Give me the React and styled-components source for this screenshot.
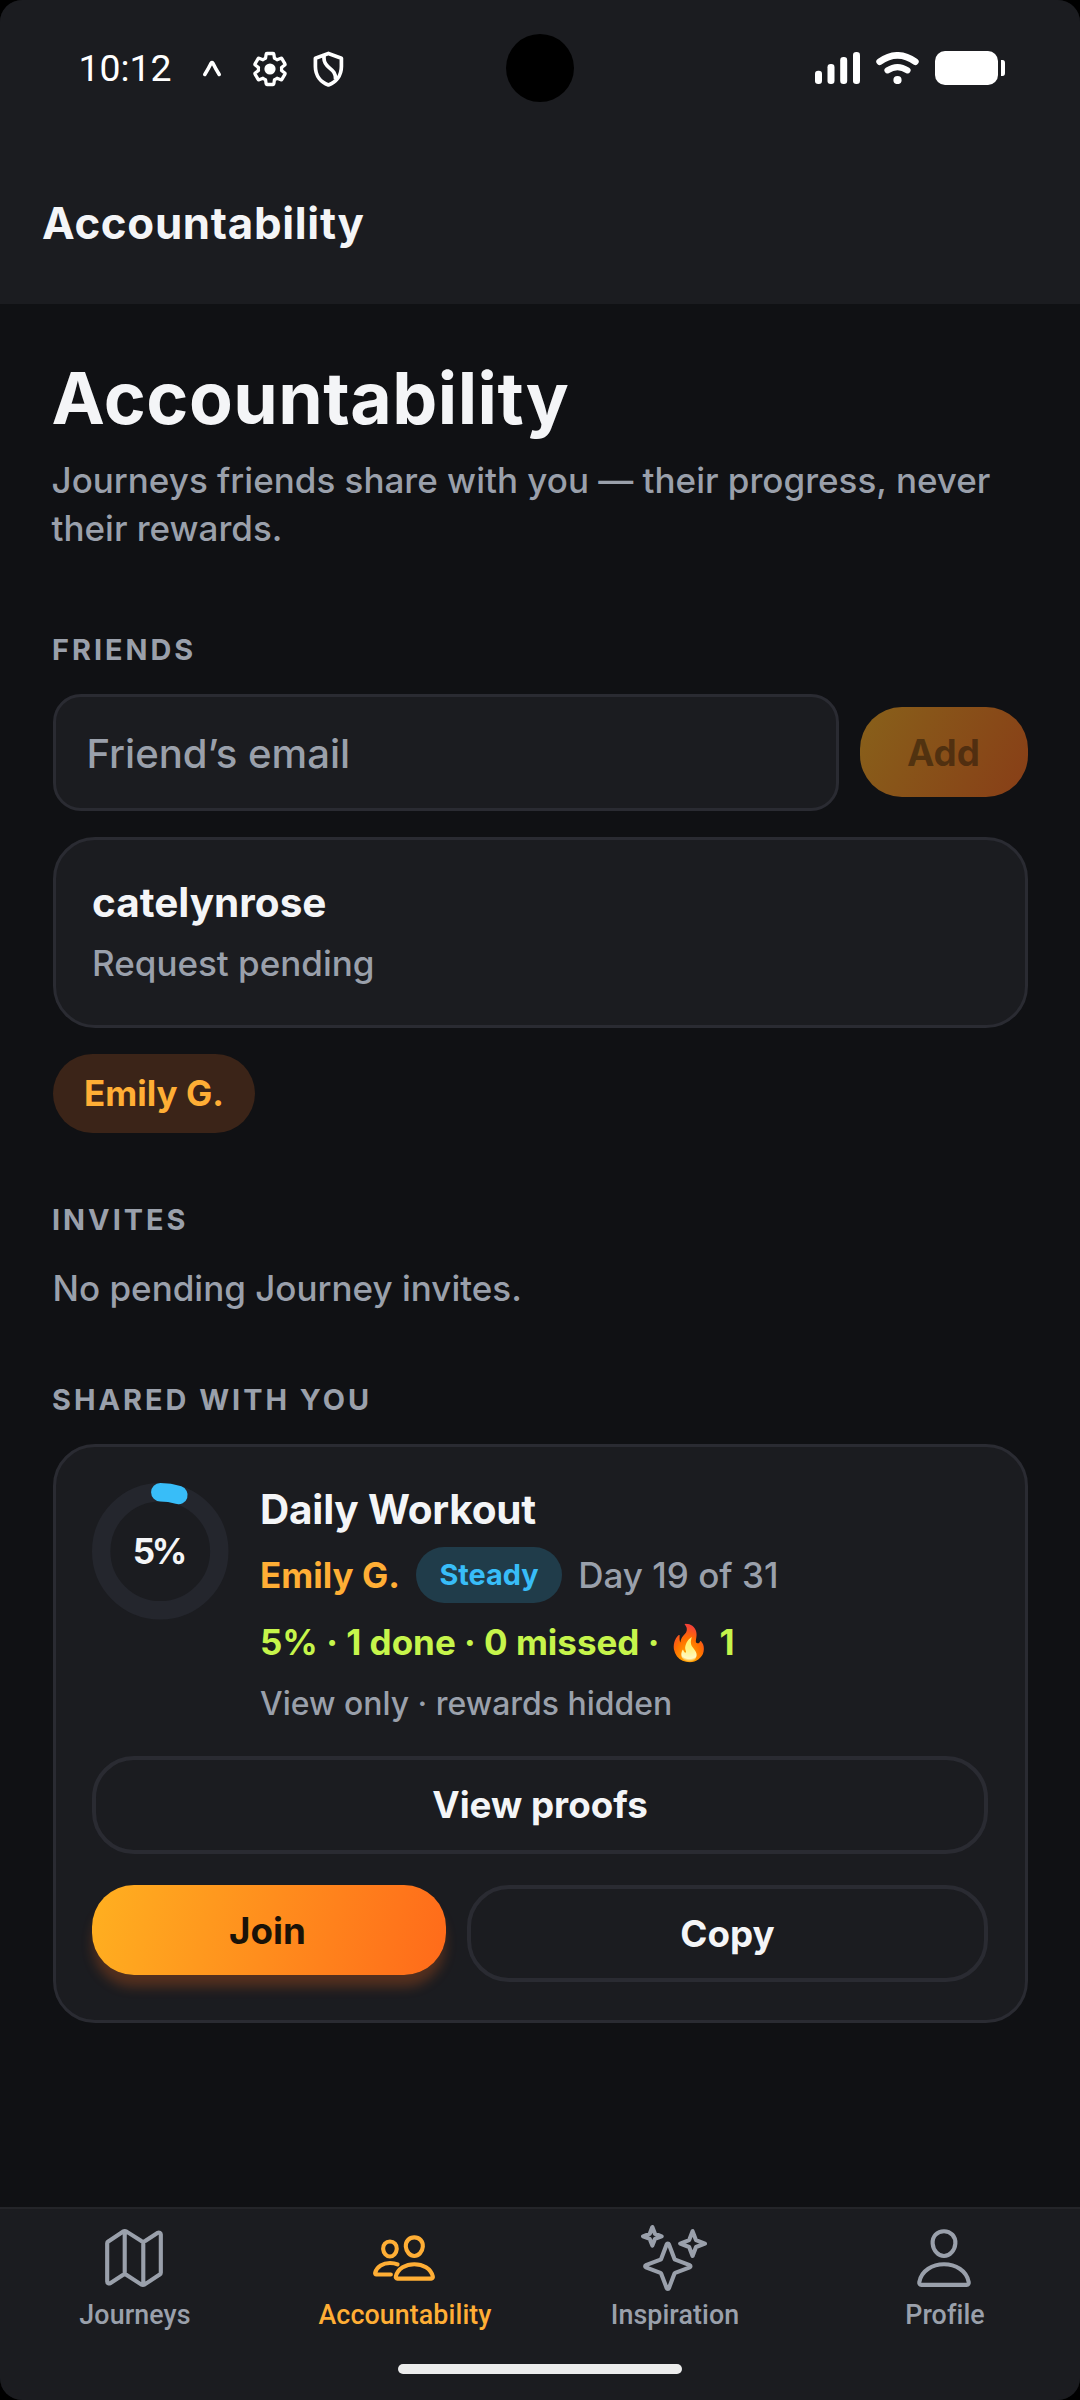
import React from "react";
import styled, { createGlobalStyle } from "styled-components";
import {
  IoMapOutline,
  IoPeopleOutline,
  IoSparklesOutline,
  IoPersonOutline,
} from "react-icons/io5";

const color = {
  page: "#101114",
  surface: "#1b1c20",
  border: "#2a2b32",
  text: "#f4f5f7",
  muted: "#9aa0ab",
  amber: "#ffae35",
  lime: "#c6f54b",
  sky: "#38bdf8",
};

const GlobalStyle = createGlobalStyle`
  body {
    margin: 0;
    background: #000;
    font-family: Inter, "Noto Color Emoji", sans-serif;
  }
  * { box-sizing: border-box; }
  h1, h2, h3, p { margin: 0; }
  button { font-family: inherit; cursor: pointer; }
`;

const Screen = styled.div`
  width: 1080px;
  height: 2400px;
  display: flex;
  flex-direction: column;
  background: ${color.page};
  border-radius: 22px;
  overflow: hidden;
`;

/* ---------- top ---------- */

const Header = styled.header`
  height: 304px;
  background: ${color.surface};
`;

const StatusBar = styled.div`
  position: relative;
  height: 136px;
  padding: 0 75px 0 78.5px;
  display: flex;
  align-items: center;
  justify-content: space-between;
  color: #fff;
`;

const StatusGroup = styled.div`
  display: flex;
  align-items: center;
  gap: 16px;
`;

const Clock = styled.span`
  font: 400 37.4px/44px Roboto, sans-serif;
  margin-right: 3px;
  padding-bottom: 1px;
`;

const Camera = styled.div`
  position: absolute;
  left: 506px;
  top: 34px;
  width: 68px;
  height: 68px;
  border-radius: 50%;
  background: #000;
`;

const HeaderTitle = styled.h2`
  padding: 58px 0 0 42px;
  font-size: 43.8px;
  line-height: 60px;
  font-weight: 700;
  letter-spacing: 0.7px;
  color: ${color.text};
`;

/* ---------- content ---------- */

const Content = styled.main`
  flex: 1;
  padding: 49px 52.5px 0;
`;

const PageTitle = styled.h1`
  margin-left: -1px;
  font-size: 71.5px;
  line-height: 90px;
  font-weight: 700;
  letter-spacing: 0.5px;
  color: ${color.text};
`;

const Subtitle = styled.p`
  margin: 13px 0 0 -1px;
  font-size: 35px;
  line-height: 48px;
  font-weight: 500;
  color: ${color.muted};
`;

const Section = styled.section`
  margin-top: ${(p) => p.$top}px;
`;

const SectionLabel = styled.h3`
  margin-left: -0.5px;
  font-size: 28.875px;
  line-height: 36px;
  font-weight: 700;
  letter-spacing: 3px;
  text-transform: uppercase;
  color: ${color.muted};
`;

const AddRow = styled.div`
  margin-top: 26px;
  display: flex;
  align-items: center;
  gap: 21px;
`;

const EmailInput = styled.input`
  flex: 1;
  min-width: 0;
  height: 117px;
  padding: 2px 31px 0;
  border: 3px solid ${color.border};
  border-radius: 28px;
  background: ${color.surface};
  color: ${color.text};
  font: 500 40.1px/50px Inter, sans-serif;
  outline: none;
  &::placeholder {
    color: ${color.muted};
    opacity: 1;
  }
`;

const Button = styled.button`
  height: 90px;
  padding: 0;
  border: 0;
  border-radius: 42px;
  font-size: 36.75px;
  line-height: 46px;
  font-weight: 700;
  display: flex;
  align-items: center;
  justify-content: center;
`;

const AddButton = styled(Button)`
  width: 168px;
  padding: 2px 0 0;
  margin-bottom: 2px;
  background: linear-gradient(118deg, rgba(255, 176, 32, 0.5), rgba(255, 106, 26, 0.5));
  color: rgba(26, 18, 8, 0.5);
`;

const JoinButton = styled(Button)`
  padding: 2px 3px 0 0;
  background: linear-gradient(104deg, #ffb020, #ff6a1a);
  color: #1a1208;
  box-shadow: 0 13px 12px -1px rgba(255, 106, 26, 0.25);
`;

const OutlineButton = styled(Button)`
  width: 100%;
  height: ${(p) => p.$height}px;
  border: 4px solid ${color.border};
  background: transparent;
  color: ${color.text};
`;

const Card = styled.article`
  margin-top: ${(p) => p.$top}px;
  padding: ${(p) => p.$padY}px 36.5px;
  height: ${(p) => p.$height}px;
  border: 3px solid ${color.border};
  border-radius: 42px;
  background: ${color.surface};
`;

const CardTitle = styled.h3`
  font-size: 40.5px;
  line-height: 50px;
  font-weight: 700;
  letter-spacing: ${(p) => p.$tracking || 0}px;
  color: ${color.text};
`;

const Body = styled.p`
  margin-top: ${(p) => p.$top || 0}px;
  font-size: ${(p) => p.$size || 35}px;
  line-height: 46px;
  font-weight: ${(p) => p.$weight || 500};
  color: ${(p) => p.$color || color.muted};
`;

const FriendChip = styled.span`
  margin-top: 26px;
  width: fit-content;
  height: 79px;
  padding: 0 31.5px 1px;
  display: flex;
  align-items: center;
  border-radius: 42px;
  background: #3b2418;
  color: ${color.amber};
  font-size: 35px;
  font-weight: 700;
`;

const Summary = styled.div`
  display: flex;
  gap: 31.5px;
  height: 273px;
`;

const RingBox = styled.div`
  width: 136.5px;
  height: 136.5px;
  display: grid;
  place-items: center;
  & > * {
    grid-area: 1 / 1;
  }
`;

const RingLabel = styled.span`
  font-size: 35px;
  line-height: 40px;
  font-weight: 700;
  letter-spacing: -3.5px;
  margin-right: 4px;
  color: ${color.text};
`;

const Details = styled.div`
  padding-top: 2px;
`;

const MetaRow = styled.div`
  margin-top: 12px;
  display: flex;
  align-items: center;
  gap: 15.75px;
`;

const StatusPill = styled.span`
  height: 56px;
  padding: 0 23.8px;
  display: flex;
  align-items: center;
  border-radius: 28px;
  background: #203c4a;
  color: ${color.sky};
  font-size: 28.875px;
  line-height: 36px;
  font-weight: 700;
`;

const Actions = styled.div`
  margin-top: 31px;
  display: grid;
  grid-template-columns: 354fr 521fr;
  gap: 21px;
  align-items: start;
`;

/* ---------- bottom ---------- */

const BottomBar = styled.footer`
  height: 193px;
  border-top: 2px solid #242529;
  background: ${color.surface};
  display: flex;
  flex-direction: column;
  align-items: center;
`;

const Tabs = styled.nav`
  width: 100%;
  margin-left: -2px;
  padding-top: 16px;
  display: grid;
  grid-template-columns: repeat(4, 1fr);
`;

const Tab = styled.a`
  display: flex;
  flex-direction: column;
  align-items: center;
  gap: 8px;
  color: ${(p) => (p.$active ? color.amber : color.muted)};
  font: 500 26.8px/32px Roboto, sans-serif;
  letter-spacing: 0.1px;
  svg {
    width: 66px;
    height: 66px;
  }
`;

const TabLabel = styled.span`
  padding-left: 2px;
`;

const HomeIndicator = styled.div`
  margin-top: 33px;
  width: 284px;
  height: 10px;
  border-radius: 5px;
  background: #ececec;
`;

const CaretIcon = () => (
  <svg width="42" height="42" viewBox="0 0 42 42" fill="none" stroke="#fff" strokeWidth="3.6" strokeLinecap="round" strokeLinejoin="round">
    <path d="M13.8 27.4 Q17 22.5 20.2 16 Q21 14.9 21.8 16 Q25 22.5 28.2 27.4" />
  </svg>
);

const GearIcon = () => (
  <svg width="42" height="42" viewBox="0 0 42 42" fill="none" stroke="#fff">
    <g transform="translate(21 22) scale(1.55) translate(-12 -12)">
      <path
        strokeWidth="2.1"
        strokeLinejoin="round"
        d="M19.43 12.98c.04-.32.07-.64.07-.98 0-.34-.03-.66-.07-.98l2.11-1.65c.19-.15.24-.42.12-.64l-2-3.46a.5.5 0 0 0-.61-.22l-2.49 1c-.52-.4-1.08-.73-1.69-.98l-.38-2.65A.488.488 0 0 0 14 2h-4c-.25 0-.46.18-.49.42l-.38 2.65c-.61.25-1.17.59-1.69.98l-2.49-1a.5.5 0 0 0-.61.22l-2 3.46c-.13.22-.07.49.12.64l2.11 1.65c-.04.32-.07.65-.07.98 0 .33.03.66.07.98l-2.11 1.65c-.19.15-.24.42-.12.64l2 3.46a.5.5 0 0 0 .61.22l2.49-1c.52.4 1.08.73 1.69.98l.38 2.65c.03.24.24.42.49.42h4c.25 0 .46-.18.49-.42l.38-2.65c.61-.25 1.17-.59 1.69-.98l2.49 1a.5.5 0 0 0 .61-.22l2-3.46c.12-.22.07-.49-.12-.64z"
      />
    </g>
    <circle cx="21" cy="22" r="5.6" fill="#fff" stroke="none" />
  </svg>
);

const ShieldIcon = () => (
  <svg width="42" height="42" viewBox="0 0 42 42" fill="none" stroke="#fff" strokeWidth="3.7" strokeLinejoin="round">
    <path d="M21.4 6.4 L34.4 11.2 V19.5 C34.4 29 28.6 35.4 21.4 38 C14.2 35.4 8.4 29 8.4 19.5 V11.2 Z" />
    <path d="M17 8 V11.5 C17 22 29.4 20.5 28.6 32.5" />
  </svg>
);

const SignalIcon = () => (
  <svg width="45" height="32" viewBox="0 0 45 32" fill="#fff">
    <rect x="0" y="18.7" width="7" height="13.3" rx="3.2" />
    <rect x="12.5" y="12" width="7" height="20" rx="3.2" />
    <rect x="25.2" y="5" width="7" height="27" rx="3.2" />
    <rect x="38" y="0" width="7" height="32" rx="3.2" />
  </svg>
);

const WifiIcon = () => (
  <svg width="43" height="32" viewBox="0 0 43 32" fill="none" stroke="#fff" strokeLinecap="round">
    <path d="M3.6 9.7 Q21.5 -3 39.4 9.7" strokeWidth="6.6" />
    <path d="M11.5 18.3 Q21.5 11.8 31.5 18.3" strokeWidth="6.2" />
    <circle cx="21.5" cy="28" r="4.1" fill="#fff" stroke="none" />
  </svg>
);

const BatteryIcon = () => (
  <svg width="70" height="34" viewBox="0 0 70 34" fill="#fff">
    <rect x="0" y="0" width="63" height="34" rx="10" />
    <path d="M66 9 H67.5 Q70 9 70 12 V22 Q70 25 67.5 25 H66 Z" />
  </svg>
);

const ProgressRing = ({ percent }) => {
  const r = 59.06;
  const c = 2 * Math.PI * r;
  return (
    <RingBox>
      <svg width="136.5" height="136.5" viewBox="0 0 136.5 136.5" fill="none" strokeWidth="18.375">
        <circle cx="68.25" cy="68.25" r={r} stroke="#24262d" />
        <circle
          cx="68.25"
          cy="68.25"
          r={r}
          stroke={color.sky}
          strokeLinecap="round"
          strokeDasharray={`${(c * percent) / 100} ${c}`}
          transform="rotate(-90 68.25 68.25)"
        />
      </svg>
      <RingLabel>{percent}%</RingLabel>
    </RingBox>
  );
};

const tabs = [
  { label: "Journeys", Icon: IoMapOutline },
  { label: "Accountability", Icon: IoPeopleOutline, active: true },
  { label: "Inspiration", Icon: IoSparklesOutline },
  { label: "Profile", Icon: IoPersonOutline },
];

export default function App() {
  return (
    <>
      <GlobalStyle />
      <Screen>
        <Header>
          <StatusBar>
            <StatusGroup>
              <Clock>10:12</Clock>
              <CaretIcon />
              <GearIcon />
              <ShieldIcon />
            </StatusGroup>
            <Camera />
            <StatusGroup>
              <SignalIcon />
              <WifiIcon />
              <BatteryIcon />
            </StatusGroup>
          </StatusBar>
          <HeaderTitle>Accountability</HeaderTitle>
        </Header>

        <Content>
          <PageTitle>Accountability</PageTitle>
          <Subtitle>Journeys friends share with you — their progress, never their rewards.</Subtitle>

          <Section $top={80}>
            <SectionLabel>Friends</SectionLabel>
            <AddRow>
              <EmailInput placeholder="Friend’s email" />
              <AddButton>Add</AddButton>
            </AddRow>
            <Card $top={26} $padY={38} $height={191}>
              <CardTitle>catelynrose</CardTitle>
              <Body $top={12}>Request pending</Body>
            </Card>
            <FriendChip>Emily G.</FriendChip>
          </Section>

          <Section $top={69}>
            <SectionLabel>Invites</SectionLabel>
            <Body $top={27}>No pending Journey invites.</Body>
          </Section>

          <Section $top={71}>
            <SectionLabel>Shared with you</SectionLabel>
            <Card $top={26} $padY={36} $height={579}>
              <Summary>
                <ProgressRing percent={5} />
                <Details>
                  <CardTitle $tracking={-0.2}>Daily Workout</CardTitle>
                  <MetaRow>
                    <Body $weight={700} $color={color.amber}>Emily G.</Body>
                    <StatusPill>Steady</StatusPill>
                    <Body>Day 19 of 31</Body>
                  </MetaRow>
                  <Body $top={16} $weight={700} $color={color.lime}>
                    5% · 1 done · 0 missed · 🔥 1
                  </Body>
                  <Body $top={16} $size={31.95}>View only · rewards hidden</Body>
                </Details>
              </Summary>
              <OutlineButton $height={98}>View proofs</OutlineButton>
              <Actions>
                <JoinButton>Join</JoinButton>
                <OutlineButton $height={97}>Copy</OutlineButton>
              </Actions>
            </Card>
          </Section>
        </Content>

        <BottomBar>
          <Tabs>
            {tabs.map(({ label, Icon, active }) => (
              <Tab key={label} $active={active}>
                <Icon />
                <TabLabel>{label}</TabLabel>
              </Tab>
            ))}
          </Tabs>
          <HomeIndicator />
        </BottomBar>
      </Screen>
    </>
  );
}
